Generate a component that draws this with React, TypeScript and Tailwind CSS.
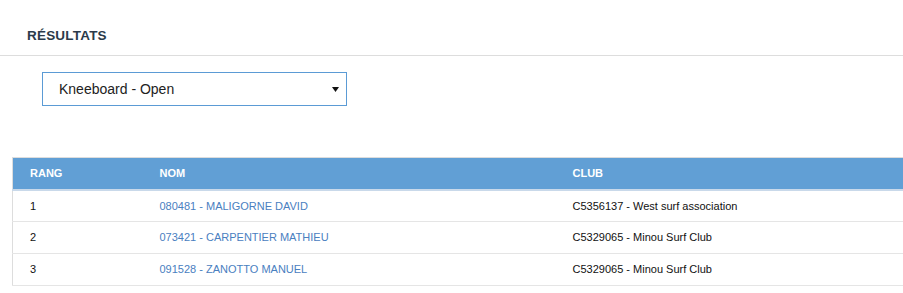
import React from 'react';

const rows = [
  { rang: '1', nom: '080481 - MALIGORNE DAVID', club: 'C5356137 - West surf association' },
  { rang: '2', nom: '073421 - CARPENTIER MATHIEU', club: 'C5329065 - Minou Surf Club' },
  { rang: '3', nom: '091528 - ZANOTTO MANUEL', club: 'C5329065 - Minou Surf Club' },
];

export default function App() {
  return (
    <div className="w-[903px] h-[293px] overflow-hidden bg-white font-['Liberation_Sans',Arial,sans-serif]">
      <div className="h-[56px] border-b border-[#dddddd] flex items-center pl-[27px] pt-[18px]">
        <h2 className="text-[13.5px] font-bold text-[#2b3a4a] tracking-[0.2px]">RÉSULTATS</h2>
      </div>

      <div className="pl-[42px] pt-[16px]">
        <div className="w-[305px] h-[34px] border border-[#5b9bd5] flex items-center justify-between pl-[16px] pr-[7px]">
          <span className="text-[14px] text-[#222222]">Kneeboard - Open</span>
          <svg width="7" height="5" viewBox="0 0 7 5">
            <path d="M0 0 L7 0 L3.5 5 Z" fill="#111111" />
          </svg>
        </div>
      </div>

      <div className="pl-[12px] pt-[51px]">
        <table className="w-[891px] border-collapse text-[11px] border-l border-[#dddddd]">
          <thead>
            <tr className="bg-[#619fd5] border-t border-[#dddddd] border-b-2 border-b-[#c9d9ea]">
              <th className="w-[130px] h-[32px] pl-[17px] text-left font-bold text-white">RANG</th>
              <th className="w-[413px] pl-[17px] text-left font-bold text-white">NOM</th>
              <th className="pl-[17px] text-left font-bold text-white">CLUB</th>
            </tr>
          </thead>
          <tbody>
            {rows.map((r) => (
              <tr key={r.rang} className="border-b border-[#e5e5e5]">
                <td className="h-[32px] pl-[17px] text-[#111111]">{r.rang}</td>
                <td className="pl-[17px] text-[#4a80bf]">{r.nom}</td>
                <td className="pl-[17px] text-[#111111]">{r.club}</td>
              </tr>
            ))}
          </tbody>
        </table>
      </div>
    </div>
  );
}
